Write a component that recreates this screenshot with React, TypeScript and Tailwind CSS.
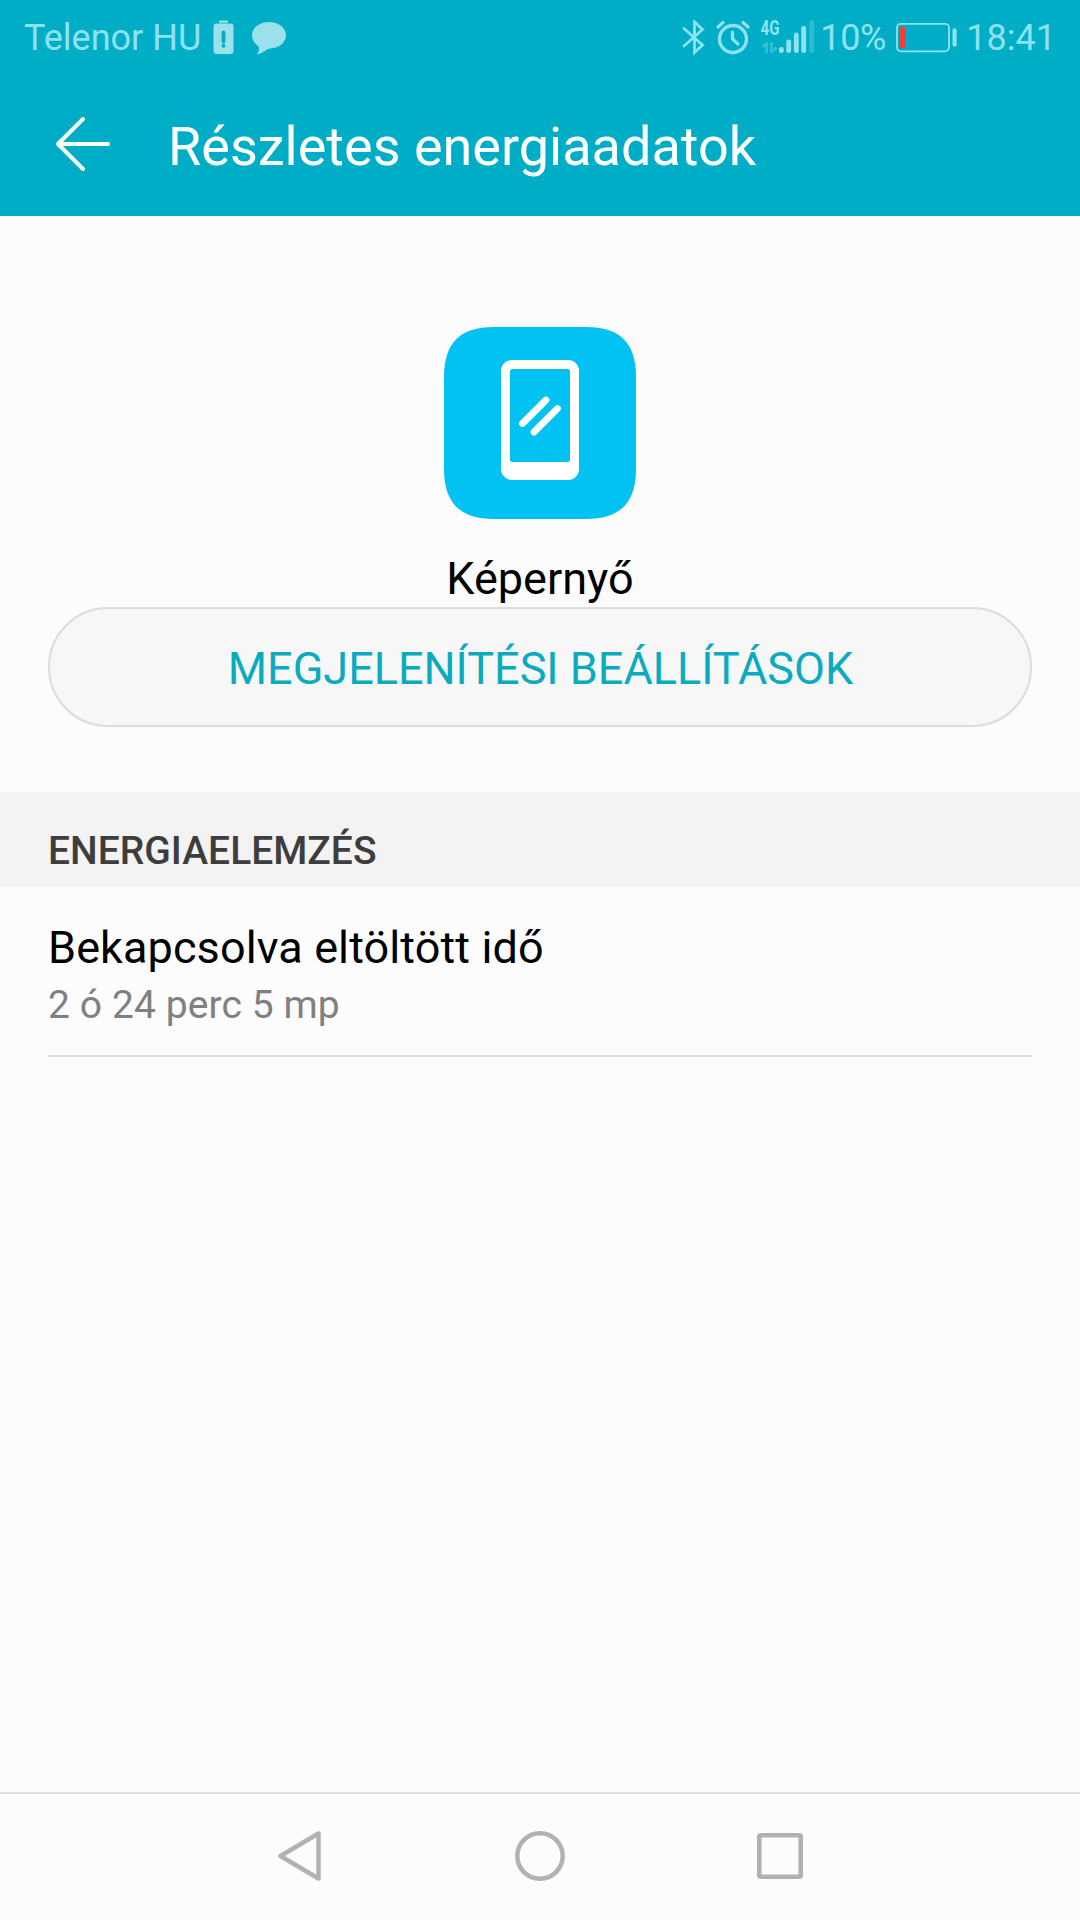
import type { ReactNode } from 'react';

// ── Status bar icons ──────────────────────────────────────────────────────────

function BatteryAlertIcon() {
  return (
    <svg width="22" height="36" viewBox="0 0 22 36" className="text-[#9ae1eb]">
      <rect x="6" y="0.5" width="9" height="2.2" rx="0.6" fill="currentColor" />
      <rect x="0.5" y="3.5" width="20" height="30.500" rx="3" fill="currentColor" />
      <path d="M10.500 12.500V21.500M10.500 25.700V25.800" stroke="#00adc6" strokeWidth="3.800" strokeLinecap="round" />
    </svg>
  );
}

function BubbleIcon() {
  return (
    <svg width="36" height="36" viewBox="0 0 36 36" className="text-[#9ae1eb]">
      <path
        fill="currentColor"
        d="M18 2C27.500 2 35 7.800 35 15.200C35 22.700 27.500 28.500 18.500 28.500C15.500 29.500 11 33.500 7.300 34.200C6.200 34.300 6.200 33.400 6.900 32.700C8 31.300 8.300 28.300 7.600 26.200C3.700 23.800 1 19.800 1 15.200C1 7.800 8.500 2 18 2Z"
      />
    </svg>
  );
}

function BluetoothIcon() {
  return (
    <svg width="24" height="36" viewBox="0 0 24 36" fill="none" stroke="currentColor" strokeWidth="2.8" strokeLinecap="round">
      <path d="M2 8.500L20.500 25L12.500 32.500V1.800L20.500 9.500L2 26" />
    </svg>
  );
}

function AlarmIcon() {
  return (
    <svg width="34" height="36" viewBox="0 0 34 36" fill="none" stroke="currentColor" strokeLinecap="round">
      <circle cx="17" cy="19" r="13.500" strokeWidth="3.4" />
      <path d="M16.500 12V19L22 24" strokeWidth="3.200" strokeLinejoin="round" />
      <path d="M2 7L7 2.500M27 2.500L32 7" strokeWidth="3.200" />
    </svg>
  );
}

function SignalIcon() {
  return (
    <svg width="55" height="36" viewBox="0 0 55 36" fill="currentColor" overflow="visible">
      <text
        x="0.500"
        y="14.500"
        fontSize="20"
        fontWeight="700"
        textLength="19"
        lengthAdjust="spacingAndGlyphs"
      >
        4G
      </text>
      <g opacity="0.350">
        <path d="M1.500 26.500L5.500 22H8V33H5.200V26.500L3.500 28Z" />
        <path d="M10 22H12.800V29.500L15 26.500L17.500 28.500L12.500 33H10Z" />
      </g>
      <rect x="19" y="27" width="4.800" height="6" rx="2.200" />
      <rect x="26.300" y="19.500" width="4.800" height="13.500" rx="2.200" />
      <rect x="33.900" y="12.500" width="4.800" height="20.500" rx="2.200" />
      <rect x="41.300" y="6" width="4.800" height="27" rx="2.200" />
      <rect x="49.300" y="0" width="4.800" height="33" rx="2.200" opacity="0.300" />
    </svg>
  );
}

function BatteryIcon() {
  return (
    <svg width="62" height="36" viewBox="0 0 62 36">
      <rect x="1" y="3.800" width="52" height="27.500" rx="4" fill="none" stroke="currentColor" strokeWidth="1.800" />
      <rect x="56.500" y="8.300" width="4.200" height="18.500" rx="2" fill="currentColor" />
      <rect x="3.700" y="6.500" width="5.300" height="22" rx="2" fill="#f33c35" />
    </svg>
  );
}

function StatusBar() {
  return (
    <div className="flex h-[75px] items-center justify-between pr-6 pl-6 text-[36px] leading-[42px] text-[#8ce3ef]">
      <div className="flex items-center">
        <span className="w-[189px] whitespace-nowrap">Telenor HU</span>
        <BatteryAlertIcon />
        <span className="w-4" />
        <BubbleIcon />
      </div>
      <div className="flex items-center">
        <BluetoothIcon />
        <span className="w-2.5" />
        <AlarmIcon />
        <span className="w-2.5" />
        <SignalIcon />
        <span className="ml-[5px] w-[76px] tracking-[-0.4px] whitespace-nowrap">10%</span>
        <BatteryIcon />
        <span className="ml-2 whitespace-nowrap">18:41</span>
      </div>
    </div>
  );
}

// ── Content ───────────────────────────────────────────────────────────────────

function BackArrow() {
  return (
    <svg width="56" height="56" viewBox="0 0 56 56" fill="none" stroke="currentColor" strokeWidth="4" strokeLinecap="round" strokeLinejoin="round">
      <path d="M28 3L3 28L28 53M3 28H53" />
    </svg>
  );
}

function ScreenAppIcon() {
  return (
    <svg width="192" height="192" viewBox="0 0 192 192">
      <path
        fill="#02c1f3"
        d="M50 0H142C176 0 192 16 192 50V142C192 176 176 192 142 192H50C16 192 0 176 0 142V50C0 16 16 0 50 0Z"
      />
      <rect x="57" y="33" width="78" height="120" rx="11" fill="#fff" />
      <rect x="66" y="42" width="60" height="93" rx="2.500" fill="#02c1f3" />
      <path d="M78.500 96.500L102 73M90 105L113.500 81.500" stroke="#fff" strokeWidth="6.800" strokeLinecap="round" />
    </svg>
  );
}

function NavButton({ label, children }: { label: string; children: ReactNode }) {
  return (
    <button aria-label={label} className="flex w-60 items-center justify-center">
      <svg width="56" height="56" viewBox="0 0 56 56" fill="none" stroke="#b1b1b1" strokeWidth="4.500" strokeLinejoin="round">
        {children}
      </svg>
    </button>
  );
}

export default function App() {
  return (
    <div className="flex h-[1920px] w-[1080px] flex-col overflow-hidden bg-[#fcfcfc] font-[Roboto,sans-serif] text-black">
      <header className="h-[216px] bg-[#00adc6]">
        <StatusBar />
        <div className="flex h-[141px] items-center pl-[55px] text-white">
          <button aria-label="Vissza" className="-mt-[3px]">
            <BackArrow />
          </button>
          <h1 className="mt-0.5 ml-[57px] text-[54px] leading-[64px] whitespace-nowrap">Részletes energiaadatok</h1>
        </div>
      </header>

      <main className="flex-1">
        <section className="flex flex-col items-center px-12 pt-[111px] pb-[65px]">
          <ScreenAppIcon />
          <p className="mt-[33px] mb-px text-[45px] leading-[54px]">Képernyő</p>
          <button className="flex h-[120px] w-full items-center justify-center rounded-full border-2 border-[#dcdcdc] bg-[#f7f7f7] pt-[3px] pl-px text-[45px] leading-[54px] text-[#0aabbe]">
            MEGJELENÍTÉSI BEÁLLÍTÁSOK
          </button>
        </section>

        <h2 className="h-[95px] bg-[#f3f3f3] px-12 pt-[35px] text-[39px] leading-[48px] font-medium text-[#3d3d3d]">
          ENERGIAELEMZÉS
        </h2>

        <div className="mx-12 h-[170px] border-b-2 border-[#dfdfdf] pt-[34px]">
          <p className="text-[45px] leading-[54px] tracking-[0.1px]">Bekapcsolva eltöltött idő</p>
          <p className="mt-[7px] text-[39px] leading-[46px] tracking-[0.1px] text-[#808080]">2 ó 24 perc 5 mp</p>
        </div>
      </main>

      <nav className="flex h-32 items-center justify-center border-t-2 border-[#e0e0e0] pb-0.5">
        <NavButton label="Vissza">
          <path d="M8.500 28L46.500 5.500V50.500Z" />
        </NavButton>
        <NavButton label="Kezdőképernyő">
          <circle cx="28" cy="28" r="22.700" />
        </NavButton>
        <NavButton label="Legutóbbiak">
          <rect x="7.300" y="7.300" width="41.400" height="41.400" rx="1.500" />
        </NavButton>
      </nav>
    </div>
  );
}
